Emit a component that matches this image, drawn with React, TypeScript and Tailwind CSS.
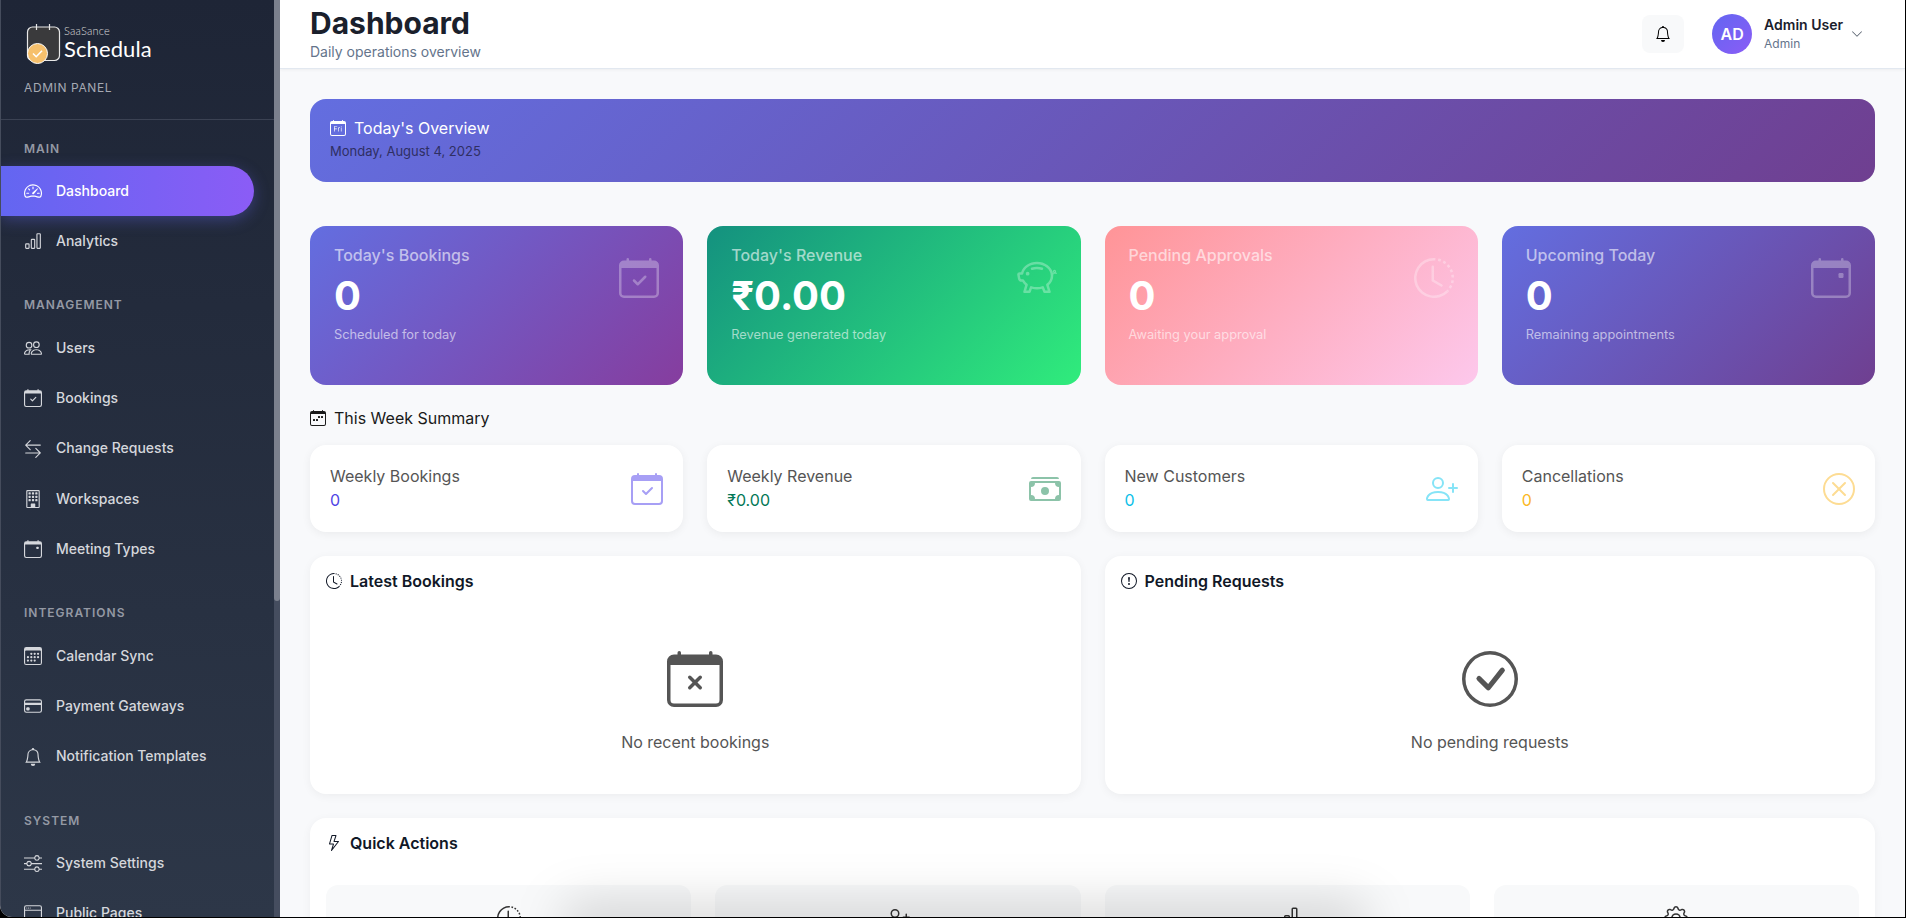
import type { ReactNode } from 'react';
import {
  BsBarChart,
  BsArrowLeftRight,
  BsBell,
  BsBuilding,
  BsCalendar3,
  BsCalendarCheck,
  BsCalendarDay,
  BsCalendarEvent,
  BsCalendarWeek,
  BsCalendarX,
  BsCashStack,
  BsCheckCircle,
  BsChevronDown,
  BsClockHistory,
  BsCreditCard,
  BsExclamationCircle,
  BsGear,
  BsLightning,
  BsPeople,
  BsPersonPlus,
  BsPiggyBank,
  BsSliders,
  BsSpeedometer2,
  BsWindow,
  BsXCircle,
} from 'react-icons/bs';

const navSections = [
  {
    title: 'MAIN',
    items: [
      { label: 'Dashboard', icon: <BsSpeedometer2 />, active: true },
      { label: 'Analytics', icon: <BsBarChart /> },
    ],
  },
  {
    title: 'MANAGEMENT',
    items: [
      { label: 'Users', icon: <BsPeople /> },
      { label: 'Bookings', icon: <BsCalendarCheck /> },
      { label: 'Change Requests', icon: <BsArrowLeftRight /> },
      { label: 'Workspaces', icon: <BsBuilding /> },
      { label: 'Meeting Types', icon: <BsCalendarEvent /> },
    ],
  },
  {
    title: 'INTEGRATIONS',
    items: [
      { label: 'Calendar Sync', icon: <BsCalendar3 /> },
      { label: 'Payment Gateways', icon: <BsCreditCard /> },
      { label: 'Notification Templates', icon: <BsBell /> },
    ],
  },
  {
    title: 'SYSTEM',
    items: [
      { label: 'System Settings', icon: <BsSliders /> },
      { label: 'Public Pages', icon: <BsWindow /> },
    ],
  },
];

const statCards = [
  {
    title: "Today's Bookings",
    value: '0',
    note: 'Scheduled for today',
    icon: <BsCalendarCheck />,
    bg: 'bg-[linear-gradient(135deg,#636ee0_0%,#863d9e_100%)]',
  },
  {
    title: "Today's Revenue",
    value: '₹0.00',
    note: 'Revenue generated today',
    icon: <BsPiggyBank />,
    bg: 'bg-[linear-gradient(135deg,#14917f_0%,#30ec7c_100%)]',
  },
  {
    title: 'Pending Approvals',
    value: '0',
    note: 'Awaiting your approval',
    icon: <BsClockHistory />,
    bg: 'bg-[linear-gradient(135deg,#ff9497_0%,#fdc8ec_100%)]',
  },
  {
    title: 'Upcoming Today',
    value: '0',
    note: 'Remaining appointments',
    icon: <BsCalendarEvent />,
    bg: 'bg-[linear-gradient(135deg,#636ee0_0%,#6f3f90_100%)]',
  },
];

const weekCards = [
  { title: 'Weekly Bookings', value: '0', color: 'text-[#4f46e5]', iconColor: 'text-[#a79ff5]', icon: <BsCalendarCheck /> },
  { title: 'Weekly Revenue', value: '₹0.00', color: 'text-[#047857]', iconColor: 'text-[#8cc3a9]', icon: <BsCashStack /> },
  { title: 'New Customers', value: '0', color: 'text-[#0dc0e8]', iconColor: 'text-[#86e4f7]', icon: <BsPersonPlus /> },
  { title: 'Cancellations', value: '0', color: 'text-[#fbb724]', iconColor: 'text-[#fddc93]', icon: <BsXCircle /> },
];

const quickActions = [<BsClockHistory />, <BsPersonPlus />, <BsBarChart />, <BsGear />];

function Logo() {
  return (
    <div className="flex h-[42px] items-center pl-[2px]">
      <svg width="38" height="42" viewBox="0 0 38 42" fill="none">
        <rect x="1.5" y="4" width="32" height="33.5" rx="5" fill="#3a3a3c" stroke="#e8e8e8" strokeWidth="1.2" />
        <path d="M10.5 1v6M23.5 1v6" stroke="#e8e8e8" strokeWidth="1.2" />
        <circle cx="11.5" cy="30.5" r="10" fill="#f6c06c" stroke="#ffffff" strokeWidth="1" />
        <path d="M7 30.5l3.2 3.2 5.8-6" stroke="#ffffff" strokeWidth="1.6" fill="none" />
      </svg>
      <div className="-mt-[2px] flex flex-col">
        <span className="font-['Lato',sans-serif] text-[11px] leading-[12px] font-light tracking-[0.2px] text-[#dcdcdc]">SaaSance</span>
        <span className="font-['Lato',sans-serif] text-[22px] leading-[24px] font-normal tracking-[0.1px] text-white">Schedula</span>
      </div>
    </div>
  );
}

function Sidebar() {
  return (
    <aside className="flex h-full w-[280px] shrink-0 border-l border-[#454c5c] bg-[linear-gradient(180deg,#1e2536_0%,#2d3748_100%)]">
      <div className="w-[273px] overflow-hidden">
        <div className="h-[120px] border-b border-[#3b4253] pt-[23px]">
          <div className="pl-[23px]">
            <Logo />
            <div className="mt-[13px] text-[12px] leading-[20px] font-normal tracking-[0.6px] text-[#a5a9b3]">ADMIN PANEL</div>
          </div>
        </div>
        <nav className="pt-[18.6px]">
          {navSections.map((section) => (
            <div key={section.title} className="mb-[28.8px]">
              <div className="mb-[8px] pl-[23px] text-[12px] leading-[19.2px] font-semibold tracking-[1px] text-[#9499a4]">{section.title}</div>
              {section.items.map((item) => (
                <div
                  key={item.label}
                  className={
                    item.active
                      ? 'flex h-[50.4px] w-[253px] items-center gap-[14px] rounded-r-[25px] bg-[linear-gradient(90deg,#6366f1,#8b5cf6)] pl-[23px] text-[14px] leading-[22.4px] font-medium text-white shadow-[0_4px_15px_rgba(99,102,241,0.35)]'
                      : 'flex h-[50.4px] items-center gap-[14px] pl-[23px] text-[14px] leading-[22.4px] font-medium text-[#d5d7dc]'
                  }
                >
                  <span className="text-[18px]">{item.icon}</span>
                  <span>{item.label}</span>
                </div>
              ))}
            </div>
          ))}
        </nav>
      </div>
      <div className="h-full w-[6px] bg-[#454d5f]">
        <div className="h-[601px] rounded-b-[3px] bg-[#7b808d]" />
      </div>
    </aside>
  );
}

function Header() {
  return (
    <header className="flex h-[69px] shrink-0 items-center justify-between border-b border-[#e2e8f0] bg-white pr-[42px] pl-[30px] shadow-[0_1px_3px_rgba(0,0,0,0.05)]">
      <div className="-mt-[2px]">
        <h1 className="text-[30px] leading-[38px] font-bold text-[#1a202c]">Dashboard</h1>
        <p className="text-[14px] leading-[20px] text-[#64748b]">Daily operations overview</p>
      </div>
      <div className="flex items-center">
        <div className="flex h-[38px] w-[42px] items-center justify-center rounded-[8px] bg-[#f8f9fa] text-[16px] text-black">
          <BsBell />
        </div>
        <div className="ml-[28px] flex h-[40px] w-[40px] items-center justify-center rounded-full bg-[linear-gradient(135deg,#6366f1,#8b5cf6)] text-[16px] font-semibold text-white">AD</div>
        <div className="ml-[12px] -mt-[1px]">
          <div className="text-[14px] leading-[20px] font-semibold text-[#1a202c]">Admin User</div>
          <div className="text-[12px] leading-[18px] text-[#64748b]">Admin</div>
        </div>
        <BsChevronDown className="ml-[8px] text-[12px] text-[#4b5563]" />
      </div>
    </header>
  );
}

function Panel({ icon, title, children }: { icon: ReactNode; title: string; children?: ReactNode }) {
  return (
    <section className="rounded-[16px] bg-white p-[16px] shadow-[0_2px_10px_rgba(0,0,0,0.05)]">
      <h2 className="flex h-[18px] items-center gap-[8px] text-[16px] font-semibold text-[#111827]">
        <span className="text-[16px]">{icon}</span>
        {title}
      </h2>
      {children}
    </section>
  );
}

function EmptyState({ icon, text }: { icon: ReactNode; text: string }) {
  return (
    <div className="flex h-[188px] flex-col items-center pt-[61px]">
      <span className="text-[56px] leading-none text-[#555555]">{icon}</span>
      <p className="mt-[23px] text-[16px] leading-[24px] text-[#555555]">{text}</p>
    </div>
  );
}

export default function App() {
  return (
    <div className="relative h-screen w-full overflow-hidden bg-black pr-px pb-px font-['Inter',sans-serif]">
      <div className="flex h-full overflow-hidden rounded-bl-[12px] bg-[#f8f9fb]">
        <Sidebar />
        <main className="flex min-w-0 flex-1 flex-col overflow-hidden">
          <Header />
          <div className="px-[30px] pt-[30px]">
            <div className="flex h-[83px] flex-col justify-center rounded-[16px] bg-[linear-gradient(135deg,#636ee0_0%,#6f3f90_100%)] px-[20px] pb-[4px]">
              <div className="flex items-center gap-[8px] text-[16px] leading-[24px] font-normal text-white">
                <BsCalendarDay />
                Today's Overview
              </div>
              <div className="text-[13px] leading-[22px] text-[#2f2f63]">Monday, August 4, 2025</div>
            </div>

            <div className="mt-[44px] grid grid-cols-4 gap-[24px]">
              {statCards.map((card) => (
                <div key={card.title} className={`flex h-[159px] justify-between rounded-[16px] px-[24px] pt-[17px] ${card.bg}`}>
                  <div>
                    <div className="text-[16px] leading-[24px] font-medium text-white/60">{card.title}</div>
                    <div className="mt-[5px] text-[40px] leading-[48px] font-bold text-white">{card.value}</div>
                    <div className="mt-[5px] text-[12.8px] leading-[20px] text-white/60">{card.note}</div>
                  </div>
                  <span className="mt-[15px] text-[40px] leading-none text-white opacity-30">{card.icon}</span>
                </div>
              ))}
            </div>

            <h3 className="mt-[20px] flex h-[26px] items-center gap-[8px] text-[16px] font-normal text-[#1a1a1a]">
              <BsCalendarWeek />
              This Week Summary
            </h3>

            <div className="mt-[14px] grid grid-cols-4 gap-[24px]">
              {weekCards.map((card) => (
                <div key={card.title} className="flex h-[87px] items-center justify-between rounded-[16px] bg-white px-[20px] shadow-[0_2px_10px_rgba(0,0,0,0.06)]">
                  <div className="-mt-[2px]">
                    <div className="text-[16px] leading-[24px] text-[#555555]">{card.title}</div>
                    <div className={`text-[16px] leading-[24px] ${card.color}`}>{card.value}</div>
                  </div>
                  <span className={`text-[32px] leading-none ${card.iconColor}`}>{card.icon}</span>
                </div>
              ))}
            </div>

            <div className="mt-[24px] grid grid-cols-2 gap-[24px]">
              <Panel icon={<BsClockHistory />} title="Latest Bookings">
                <EmptyState icon={<BsCalendarX />} text="No recent bookings" />
              </Panel>
              <Panel icon={<BsExclamationCircle />} title="Pending Requests">
                <EmptyState icon={<BsCheckCircle />} text="No pending requests" />
              </Panel>
            </div>

            <div className="mt-[24px]">
              <Panel icon={<BsLightning />} title="Quick Actions">
                <div className="mt-[33px] grid grid-cols-4 gap-[24px]">
                  {quickActions.map((icon, i) => (
                    <div key={i} className="flex h-[120px] justify-center rounded-[12px] bg-[#f8f9fa] pt-[21px] text-[24px] text-[#333333]">
                      {icon}
                    </div>
                  ))}
                </div>
              </Panel>
            </div>
          </div>
        </main>
      </div>
      <div className="pointer-events-none absolute bottom-[-30px] left-[560px] h-[46px] w-[810px] rounded-full bg-black/15 blur-[24px]" />
    </div>
  );
}
